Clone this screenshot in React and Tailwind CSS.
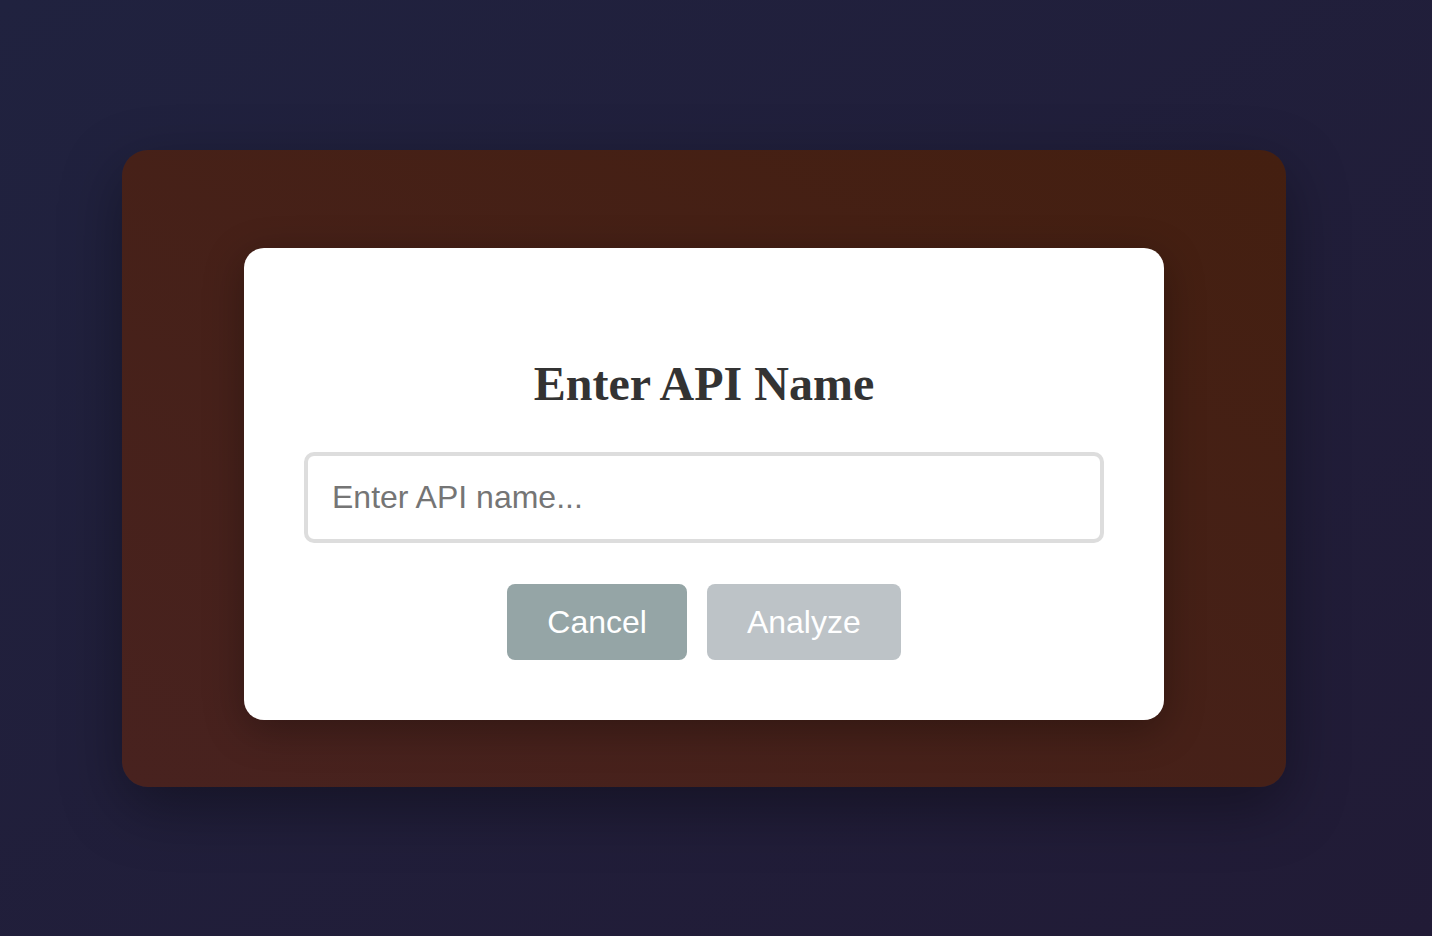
export default function App() {
  return (
    <div className="w-[1432px] h-[936px] flex items-center justify-start pl-[122px] bg-gradient-to-br from-[#20223f] to-[#211b36]">
      <div className="w-[1164px] h-[637px] rounded-[26px] bg-gradient-to-tr from-[#48221f] to-[#441f10] shadow-[0_20px_60px_rgba(0,0,0,0.35)] flex flex-col items-center pt-[98px]">
        <div className="w-[920px] h-[472px] bg-white rounded-[20px] shadow-[0_10px_40px_rgba(0,0,0,0.3)] flex flex-col items-center px-[60px] pt-[109px]">
          <h2 className="text-[48px] leading-[53px] font-bold text-[#333333] font-['Liberation_Serif','Times_New_Roman',serif] mb-[42px]">
            Enter API Name
          </h2>
          <input
            type="text"
            placeholder="Enter API name..."
            className="w-full h-[91px] border-[4px] border-[#dddddd] rounded-[10px] px-[24px] text-[32px] text-[#333] placeholder:text-[#757575] font-['Liberation_Sans',Arial,sans-serif] outline-none"
          />
          <div className="flex gap-[20px] mt-[41px]">
            <button className="h-[76px] px-[40px] rounded-[8px] bg-[#95a5a6] text-white text-[32px] font-['Liberation_Sans',Arial,sans-serif]">
              Cancel
            </button>
            <button className="h-[76px] px-[40px] rounded-[8px] bg-[#bdc3c7] text-white text-[32px] font-['Liberation_Sans',Arial,sans-serif]">
              Analyze
            </button>
          </div>
        </div>
      </div>
    </div>
  );
}
